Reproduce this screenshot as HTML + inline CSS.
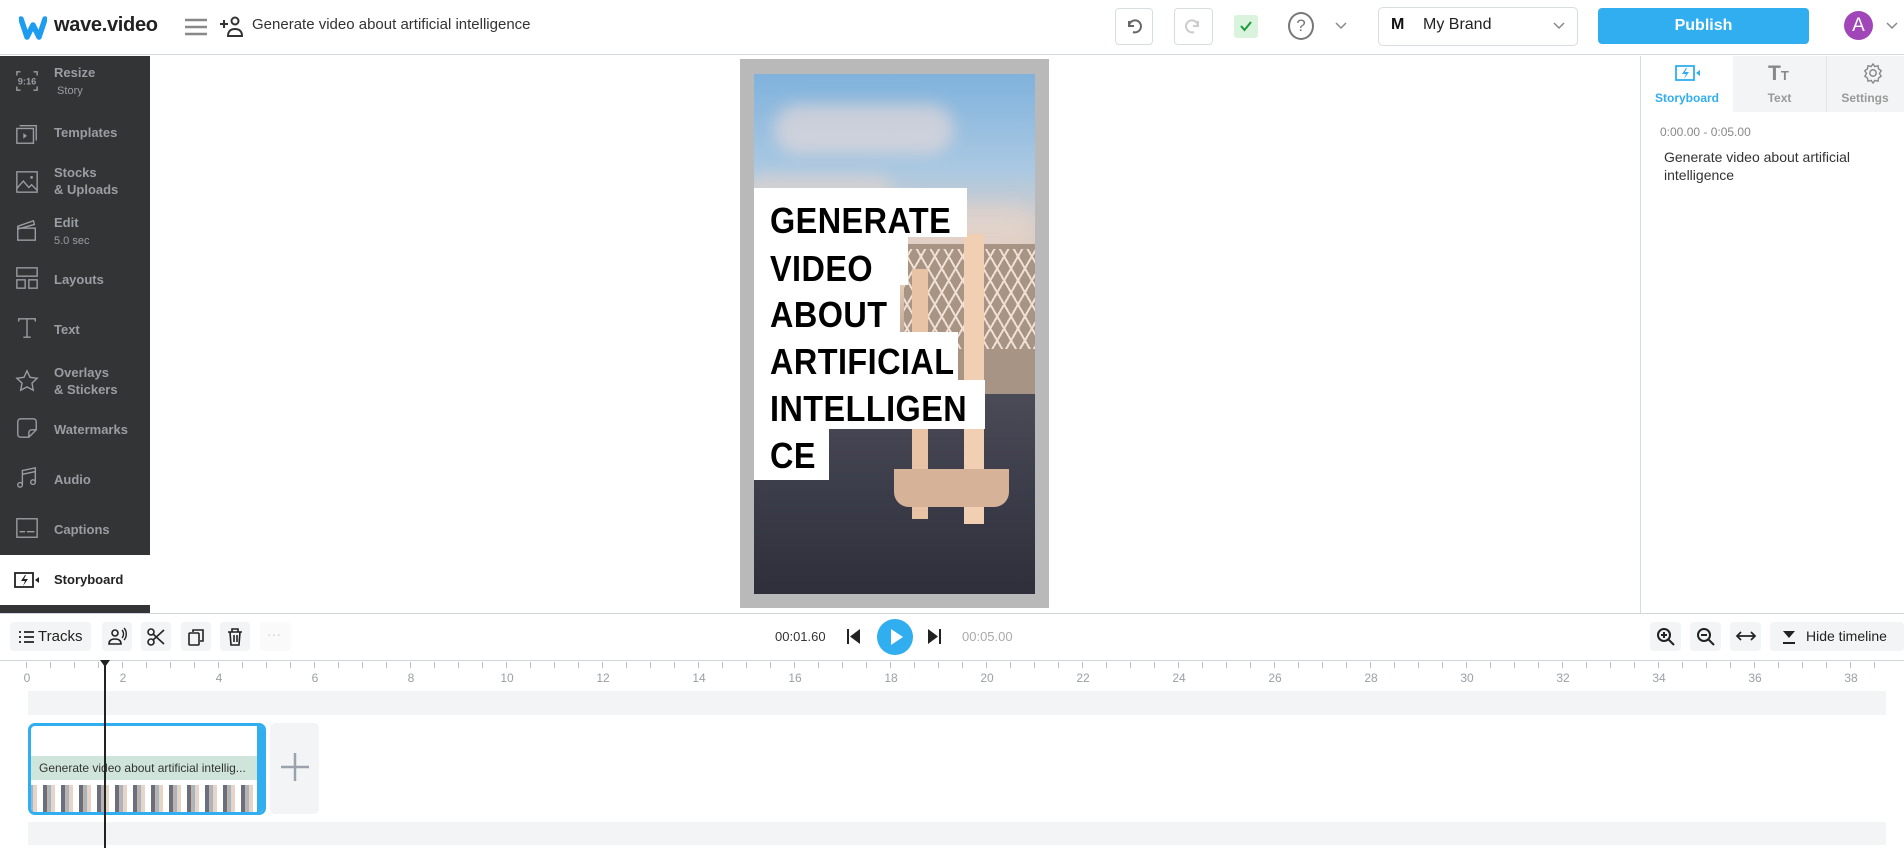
<!DOCTYPE html>
<html><head><meta charset="utf-8">
<style>
*{box-sizing:border-box;margin:0;padding:0}
body{width:1904px;height:848px;position:relative;overflow:hidden;background:#fff;font-family:"Liberation Sans",sans-serif;color:#222}
.a{position:absolute}
.hdr{left:0;top:0;width:1904px;height:55px;border-bottom:1px solid #d5dbe0;background:#fff}
.side{left:0;top:56px;width:150px;height:557px;background:#333436}
.si{position:absolute;left:0;width:150px;color:#9a9da2;font-size:13px;font-weight:bold;line-height:17px}
.si .ic{position:absolute;left:15px;width:24px;height:24px}
.si .t{position:absolute;left:54px}
.si small{font-weight:normal;font-size:11px;color:#9a9da2}
.btn{border:1px solid #d8dde2;border-radius:4px;background:#fff}
.tb{background:#f3f4f5;border-radius:4px;position:absolute;top:622px;height:29px}
.lbl{position:absolute;top:671px;font-size:12px;color:#9aa0a6;transform:translateX(-50%)}
.line{position:absolute;left:770px;color:#000;font-weight:bold;font-size:36px;line-height:48px;white-space:nowrap;transform:scaleX(.9);transform-origin:left top;letter-spacing:.5px}
.wb{position:absolute;left:754px;background:#fff;height:49px}
</style></head><body>

<div class="a hdr"></div>
<svg class="a" style="left:19px;top:16px" width="28" height="24" viewBox="0 0 28 24"><path d="M2 3 L8 21 L14 9 L20 21 L26 3" fill="none" stroke="#1e9cf0" stroke-width="5.5" stroke-linejoin="round" stroke-linecap="round"/></svg>
<div class="a" style="left:54px;top:14px;font-size:20px;font-weight:bold;color:#222;letter-spacing:-.3px">wave.video</div>
<svg class="a" style="left:184px;top:17px" width="24" height="20"><path d="M1 3h22M1 10h22M1 17h22" stroke="#888" stroke-width="2.5"/></svg>
<svg class="a" style="left:219px;top:14px" width="26" height="26" viewBox="0 0 26 26"><path d="M1 10h8M5 6v8" stroke="#333" stroke-width="2"/><circle cx="16" cy="7" r="3.5" fill="none" stroke="#333" stroke-width="2"/><path d="M9 22c0-5 3-7 7-7s7 2 7 7z" fill="none" stroke="#333" stroke-width="2"/></svg>
<div class="a" style="left:252px;top:16px;font-size:15px;color:#333">Generate video about artificial intelligence</div>

<div class="a btn" style="left:1115px;top:8px;width:38px;height:37px"></div>
<svg class="a" style="left:1125px;top:18px" width="18" height="16"><path d="M4 8a6 6 0 1 1 4 6M4 3v5h5" fill="none" stroke="#666" stroke-width="2"/></svg>
<div class="a btn" style="left:1174px;top:8px;width:39px;height:37px"></div>
<svg class="a" style="left:1184px;top:18px" width="18" height="16"><path d="M14 8a6 6 0 1 0-4 6M14 3v5h-5" fill="none" stroke="#ccc" stroke-width="2"/></svg>
<div class="a" style="left:1234px;top:15px;width:24px;height:23px;background:#d9f3dd;border-radius:3px"></div>
<svg class="a" style="left:1239px;top:19px" width="14" height="14"><path d="M2 7l3.5 4L12 3" fill="none" stroke="#1b9a3c" stroke-width="2"/></svg>
<div class="a" style="left:1288px;top:12px;width:26px;height:28px;border:2px solid #777;border-radius:50%;text-align:center;font-size:17px;line-height:24px;color:#777">?</div>
<svg class="a" style="left:1335px;top:22px" width="12" height="8"><path d="M1 1l5 5 5-5" fill="none" stroke="#888" stroke-width="1.5"/></svg>
<div class="a btn" style="left:1378px;top:7px;width:200px;height:39px;border-radius:5px"></div>
<div class="a" style="left:1391px;top:16px;font-size:16px;font-weight:bold;color:#111">M</div>
<div class="a" style="left:1423px;top:16px;font-size:16px;color:#222">My Brand</div>
<svg class="a" style="left:1553px;top:22px" width="12" height="8"><path d="M1 1l5 5 5-5" fill="none" stroke="#888" stroke-width="1.5"/></svg>
<div class="a" style="left:1598px;top:8px;width:211px;height:36px;background:#30aef0;border-radius:4px;color:#fff;font-weight:bold;font-size:16px;text-align:center;line-height:36px">Publish</div>
<div class="a" style="left:1844px;top:11px;width:29px;height:29px;border-radius:50%;background:#a146b8;color:#fff;font-size:19px;text-align:center;line-height:29px">A</div>
<svg class="a" style="left:1886px;top:22px" width="12" height="8"><path d="M1 1l5 5 5-5" fill="none" stroke="#888" stroke-width="1.5"/></svg>

<div class="a side"></div>
<div class="si" style="top:64px"><svg class="ic" style="top:5px" viewBox="0 0 26 26"><path d="M2 7V3h4M20 3h4v4M24 19v4h-4M6 23H2v-4" fill="none" stroke="#9a9da2" stroke-width="1.5"/><text x="13" y="17" font-size="10" fill="#9a9da2" text-anchor="middle" font-family="Liberation Sans">9:16</text></svg><div class="t">Resize<br><small>&nbsp;Story</small></div></div>
<div class="si" style="top:122px"><svg class="ic" viewBox="0 0 26 26"><path d="M5 4h18v16" fill="none" stroke="#9a9da2" stroke-width="1.5"/><rect x="2" y="7" width="18" height="16" fill="none" stroke="#9a9da2" stroke-width="1.5"/><path d="M9 12l4 3-4 3z" fill="#9a9da2"/></svg><div class="t" style="top:2px">Templates</div></div>
<div class="si" style="top:164px"><svg class="ic" style="top:6px" viewBox="0 0 26 26"><rect x="2" y="2" width="22" height="22" fill="none" stroke="#9a9da2" stroke-width="1.5"/><path d="M2 20l7-8 6 7 3-3 6 6" fill="none" stroke="#9a9da2" stroke-width="1.5"/><circle cx="18" cy="8" r="1.5" fill="#9a9da2"/></svg><div class="t">Stocks<br>&amp; Uploads</div></div>
<div class="si" style="top:214px"><svg class="ic" style="top:4px" viewBox="0 0 26 26"><rect x="3" y="11" width="19" height="13" fill="none" stroke="#9a9da2" stroke-width="1.5"/><path d="M3 9l17-6 1 4-18 5z" fill="none" stroke="#9a9da2" stroke-width="1.5"/></svg><div class="t">Edit<br><small>5.0 sec</small></div></div>
<div class="si" style="top:266px"><svg class="ic" viewBox="0 0 26 26"><rect x="2" y="2" width="22" height="9" fill="none" stroke="#9a9da2" stroke-width="1.5"/><rect x="2" y="15" width="9" height="9" fill="none" stroke="#9a9da2" stroke-width="1.5"/><rect x="15" y="15" width="9" height="9" fill="none" stroke="#9a9da2" stroke-width="1.5"/></svg><div class="t" style="top:5px">Layouts</div></div>
<div class="si" style="top:316px"><svg class="ic" viewBox="0 0 26 26"><path d="M4 6V3h18v3M13 3v20M9 23h8" fill="none" stroke="#9a9da2" stroke-width="1.5"/></svg><div class="t" style="top:5px">Text</div></div>
<div class="si" style="top:364px"><svg class="ic" style="top:5px" viewBox="0 0 26 26"><path d="M13 2l3.3 7 7.7 1-5.6 5.3 1.4 7.7L13 19.4 6.2 23l1.4-7.7L2 10l7.7-1z" fill="none" stroke="#9a9da2" stroke-width="1.5"/></svg><div class="t">Overlays<br>&amp; Stickers</div></div>
<div class="si" style="top:416px"><svg class="ic" viewBox="0 0 26 26"><path d="M6 3h14a3 3 0 0 1 3 3v9l-8 8H6a3 3 0 0 1-3-3V6a3 3 0 0 1 3-3zM23 15h-5a3 3 0 0 0-3 3v5" fill="none" stroke="#9a9da2" stroke-width="1.5"/></svg><div class="t" style="top:5px">Watermarks</div></div>
<div class="si" style="top:466px"><svg class="ic" viewBox="0 0 26 26"><path d="M8 20V5l14-3v15M8 9l14-3" fill="none" stroke="#9a9da2" stroke-width="1.5"/><circle cx="5.5" cy="20.5" r="2.5" fill="none" stroke="#9a9da2" stroke-width="1.5"/><circle cx="19.5" cy="17.5" r="2.5" fill="none" stroke="#9a9da2" stroke-width="1.5"/></svg><div class="t" style="top:5px">Audio</div></div>
<div class="si" style="top:516px"><svg class="ic" viewBox="0 0 26 26"><rect x="2" y="3" width="22" height="20" fill="none" stroke="#9a9da2" stroke-width="1.5"/><path d="M5 17h6M13 17h8" stroke="#9a9da2" stroke-width="1.5"/></svg><div class="t" style="top:5px">Captions</div></div>
<div class="a" style="left:0;top:555px;width:150px;height:50px;background:#fff"></div>
<svg class="a" style="left:14px;top:571px" width="26" height="18" viewBox="0 0 26 18"><rect x="1" y="2" width="18" height="14" fill="none" stroke="#222" stroke-width="1.8"/><path d="M11 4l-4 6h4l-2 5 5-7h-4l2-4z" fill="#222"/><path d="M21 9l4-3v6z" fill="#222"/></svg>
<div class="a" style="left:54px;top:572px;font-size:13px;font-weight:bold;color:#222">Storyboard</div>

<!-- canvas -->
<div class="a" style="left:740px;top:59px;width:309px;height:549px;background:#b9b9b9"></div>
<div class="a" style="left:754px;top:74px;width:281px;height:520px;overflow:hidden;background:linear-gradient(180deg,#7fb2dc 0%,#a9c8e2 18%,#d8cdc6 30%,#e6cdb8 40%,#b9a08c 52%,#4c4c58 60%,#3c3d4a 80%,#2e2f3a 100%)">
 <div class="a" style="left:20px;top:30px;width:180px;height:50px;border-radius:40px;background:rgba(240,220,215,.6);filter:blur(8px)"></div>
 <div class="a" style="left:-10px;top:100px;width:150px;height:40px;border-radius:40px;background:rgba(235,215,205,.5);filter:blur(8px)"></div>
 <div class="a" style="left:140px;top:130px;width:140px;height:40px;border-radius:40px;background:rgba(235,215,205,.5);filter:blur(8px)"></div>
 <div class="a" style="left:150px;top:170px;width:131px;height:150px;background:#a89484"></div>
 <div class="a" style="left:150px;top:175px;width:131px;height:100px;background:repeating-linear-gradient(60deg,#f0e0d4 0 2px,transparent 2px 12px),repeating-linear-gradient(-60deg,#f0e0d4 0 2px,transparent 2px 12px)"></div>
 <div class="a" style="left:158px;top:195px;width:16px;height:250px;background:#e8c3a5"></div>
 <div class="a" style="left:210px;top:160px;width:20px;height:290px;background:#f0cfb3"></div>
 <div class="a" style="left:140px;top:395px;width:115px;height:38px;border-radius:0 0 15px 15px;background:#d6b299"></div>
</div>
<div class="wb" style="top:188px;width:213px"></div>
<div class="wb" style="top:236px;width:154px"></div>
<div class="wb" style="top:284px;width:146px"></div>
<div class="wb" style="top:332px;width:204px"></div>
<div class="wb" style="top:380px;width:231px"></div>
<div class="wb" style="top:428px;width:75px;height:52px"></div>
<div class="line" style="top:197px">GENERATE</div>
<div class="line" style="top:245px">VIDEO</div>
<div class="line" style="top:291px">ABOUT</div>
<div class="line" style="top:338px">ARTIFICIAL</div>
<div class="line" style="top:385px">INTELLIGEN</div>
<div class="line" style="top:432px">CE</div>

<!-- right panel -->
<div class="a" style="left:1640px;top:56px;width:1px;height:557px;background:#d5dbe0"></div>
<div class="a" style="left:1733px;top:56px;width:171px;height:56px;background:#f3f4f5"></div>
<div class="a" style="left:1826px;top:56px;width:1px;height:56px;background:#e2e5e8"></div>
<svg class="a" style="left:1675px;top:64px" width="26" height="18" viewBox="0 0 26 18"><rect x="1" y="2" width="18" height="14" fill="none" stroke="#30aef0" stroke-width="1.8"/><path d="M11 4l-4 6h4l-2 5 5-7h-4l2-4z" fill="#30aef0"/><path d="M21 9l4-3v6z" fill="#30aef0"/></svg>
<div class="a" style="left:1641px;top:91px;width:92px;text-align:center;font-size:12px;font-weight:bold;color:#30aef0">Storyboard</div>
<div class="a" style="left:1768px;top:62px;font-size:21px;font-weight:bold;color:#888">T<span style="font-size:13px">T</span></div>
<div class="a" style="left:1733px;top:91px;width:93px;text-align:center;font-size:12px;font-weight:bold;color:#999">Text</div>
<svg class="a" style="left:1862px;top:62px" width="22" height="22" viewBox="0 0 24 24"><circle cx="12" cy="12" r="3.5" fill="none" stroke="#888" stroke-width="1.6"/><path d="M12 2l2 3 3.5-1 .5 3.5 3 2-2 3 2 3-3 2-.5 3.5-3.5-1-2 3-2-3-3.5 1-.5-3.5-3-2 2-3-2-3 3-2 .5-3.5 3.5 1z" fill="none" stroke="#888" stroke-width="1.5" stroke-linejoin="round"/></svg>
<div class="a" style="left:1826px;top:91px;width:78px;text-align:center;font-size:12px;font-weight:bold;color:#999">Settings</div>
<div class="a" style="left:1660px;top:125px;font-size:12px;color:#888">0:00.00 - 0:05.00</div>
<div class="a" style="left:1664px;top:148px;font-size:14px;color:#333;line-height:18px;width:220px">Generate video about artificial intelligence</div>

<!-- toolbar -->
<div class="a" style="left:0;top:613px;width:1904px;height:48px;border-top:1px solid #cfd6dc;border-bottom:1px solid #cfd6dc"></div>
<div class="tb" style="left:10px;width:81px"></div>
<svg class="a" style="left:18px;top:630px" width="16" height="14"><path d="M1 2h2M6 2h10M1 7h2M6 7h10M1 12h2M6 12h10" stroke="#222" stroke-width="1.8"/></svg>
<div class="a" style="left:38px;top:628px;font-size:15px;color:#222">Tracks</div>
<div class="tb" style="left:102px;width:30px"></div>
<svg class="a" style="left:107px;top:627px" width="20" height="20" viewBox="0 0 20 20"><circle cx="8" cy="6" r="3" fill="none" stroke="#222" stroke-width="1.6"/><path d="M2 17c0-4 3-5 6-5s6 1 6 5z" fill="none" stroke="#222" stroke-width="1.6"/><path d="M15 3c2 2 2 6 0 8M17 1c3 3 3 9 0 12" fill="none" stroke="#222" stroke-width="1.4"/></svg>
<div class="tb" style="left:141px;width:30px"></div>
<svg class="a" style="left:147px;top:628px" width="18" height="18" viewBox="0 0 18 18"><circle cx="4" cy="4" r="3" fill="none" stroke="#222" stroke-width="1.6"/><circle cx="4" cy="14" r="3" fill="none" stroke="#222" stroke-width="1.6"/><path d="M6 6l11 10M6 12L17 2" stroke="#222" stroke-width="1.6"/></svg>
<div class="tb" style="left:181px;width:30px"></div>
<svg class="a" style="left:187px;top:628px" width="18" height="18"><rect x="2" y="5" width="10" height="12" rx="1" fill="none" stroke="#222" stroke-width="1.6"/><path d="M6 4V2h10v11h-3" fill="none" stroke="#222" stroke-width="1.6"/></svg>
<div class="tb" style="left:220px;width:30px"></div>
<svg class="a" style="left:227px;top:628px" width="16" height="18"><path d="M1 4h14M5 4V1h6v3M3 4l1 13h8l1-13M7 7v7M10 7v7" fill="none" stroke="#222" stroke-width="1.6"/></svg>
<div class="tb" style="left:260px;width:31px;background:#fafafa"></div>
<div class="a" style="left:267px;top:626px;font-size:14px;color:#ccc">···</div>

<div class="a" style="left:775px;top:629px;font-size:13px;color:#333">00:01.60</div>
<svg class="a" style="left:846px;top:628px" width="16" height="17"><path d="M2 1v15" stroke="#222" stroke-width="2"/><path d="M14 1L4 8.5 14 16z" fill="#222"/></svg>
<div class="a" style="left:877px;top:619px;width:36px;height:36px;border-radius:50%;background:#30aef0"></div>
<svg class="a" style="left:890px;top:628px" width="14" height="18"><path d="M1 1l12 8-12 8z" fill="#fff"/></svg>
<svg class="a" style="left:926px;top:628px" width="16" height="17"><path d="M14 1v15" stroke="#222" stroke-width="2"/><path d="M2 1l10 7.5L2 16z" fill="#222"/></svg>
<div class="a" style="left:962px;top:629px;font-size:13px;color:#aaa">00:05.00</div>

<div class="tb" style="left:1650px;width:31px"></div>
<svg class="a" style="left:1656px;top:627px" width="20" height="20" viewBox="0 0 20 20"><circle cx="8" cy="8" r="6" fill="none" stroke="#222" stroke-width="2"/><path d="M12.5 12.5L18 18M5 8h6M8 5v6" stroke="#222" stroke-width="2"/></svg>
<div class="tb" style="left:1690px;width:31px"></div>
<svg class="a" style="left:1696px;top:627px" width="20" height="20" viewBox="0 0 20 20"><circle cx="8" cy="8" r="6" fill="none" stroke="#222" stroke-width="2"/><path d="M12.5 12.5L18 18M5 8h6" stroke="#222" stroke-width="2"/></svg>
<div class="tb" style="left:1730px;width:31px"></div>
<svg class="a" style="left:1735px;top:630px" width="22" height="12"><path d="M2 6h18M6 2L2 6l4 4M16 2l4 4-4 4" fill="none" stroke="#222" stroke-width="1.7"/></svg>
<div class="tb" style="left:1770px;width:134px"></div>
<svg class="a" style="left:1781px;top:629px" width="16" height="16"><path d="M2 2h12L8 9z" fill="#222"/><path d="M2 14h12" stroke="#222" stroke-width="2"/></svg>
<div class="a" style="left:1806px;top:628px;font-size:14px;color:#222">Hide timeline</div>

<!-- ruler -->
<div class="a" style="left:26px;top:662px;width:1870px;height:6px;background:repeating-linear-gradient(90deg,#b8c2ca 0 1px,transparent 1px 24px)"></div>
<div class="lbl" style="left:27px">0</div><div class="lbl" style="left:123px">2</div><div class="lbl" style="left:219px">4</div><div class="lbl" style="left:315px">6</div><div class="lbl" style="left:411px">8</div><div class="lbl" style="left:507px">10</div><div class="lbl" style="left:603px">12</div><div class="lbl" style="left:699px">14</div><div class="lbl" style="left:795px">16</div><div class="lbl" style="left:891px">18</div><div class="lbl" style="left:987px">20</div><div class="lbl" style="left:1083px">22</div><div class="lbl" style="left:1179px">24</div><div class="lbl" style="left:1275px">26</div><div class="lbl" style="left:1371px">28</div><div class="lbl" style="left:1467px">30</div><div class="lbl" style="left:1563px">32</div><div class="lbl" style="left:1659px">34</div><div class="lbl" style="left:1755px">36</div><div class="lbl" style="left:1851px">38</div>

<!-- tracks -->
<div class="a" style="left:28px;top:691px;width:1858px;height:24px;background:#f3f4f6"></div>
<div class="a" style="left:28px;top:723px;width:238px;height:92px;border:3px solid #30aef0;border-radius:7px;background:#fff;overflow:hidden">
 <div class="a" style="left:0;top:30px;width:226px;height:24px;background:#cfe5dc;font-size:12px;color:#333;line-height:24px;padding-left:8px;white-space:nowrap;overflow:hidden">Generate video about artificial intellig...</div>
 <div class="a" style="left:0;top:59px;width:226px;height:28px;background:repeating-linear-gradient(90deg,#9bb8d0 0 2px,#e8d4c4 2px 6px,#fff 6px 12px,#6a6f80 12px 16px,#c9b09c 16px 18px)"></div>
 <div class="a" style="right:0;top:0;width:6px;height:86px;background:#30aef0"></div>
</div>
<div class="a" style="left:270px;top:723px;width:49px;height:91px;background:#f3f4f6;border-radius:5px"></div>
<svg class="a" style="left:281px;top:753px" width="28" height="28"><path d="M14 0v28M0 14h28" stroke="#9aa3ab" stroke-width="2.5"/></svg>
<div class="a" style="left:28px;top:822px;width:1858px;height:23px;background:#f3f4f6"></div>

<svg class="a" style="left:99px;top:660px" width="12" height="8"><path d="M1 0h10L6 7z" fill="#222"/></svg>
<div class="a" style="left:104px;top:662px;width:2px;height:186px;background:#222"></div>
</body></html>
